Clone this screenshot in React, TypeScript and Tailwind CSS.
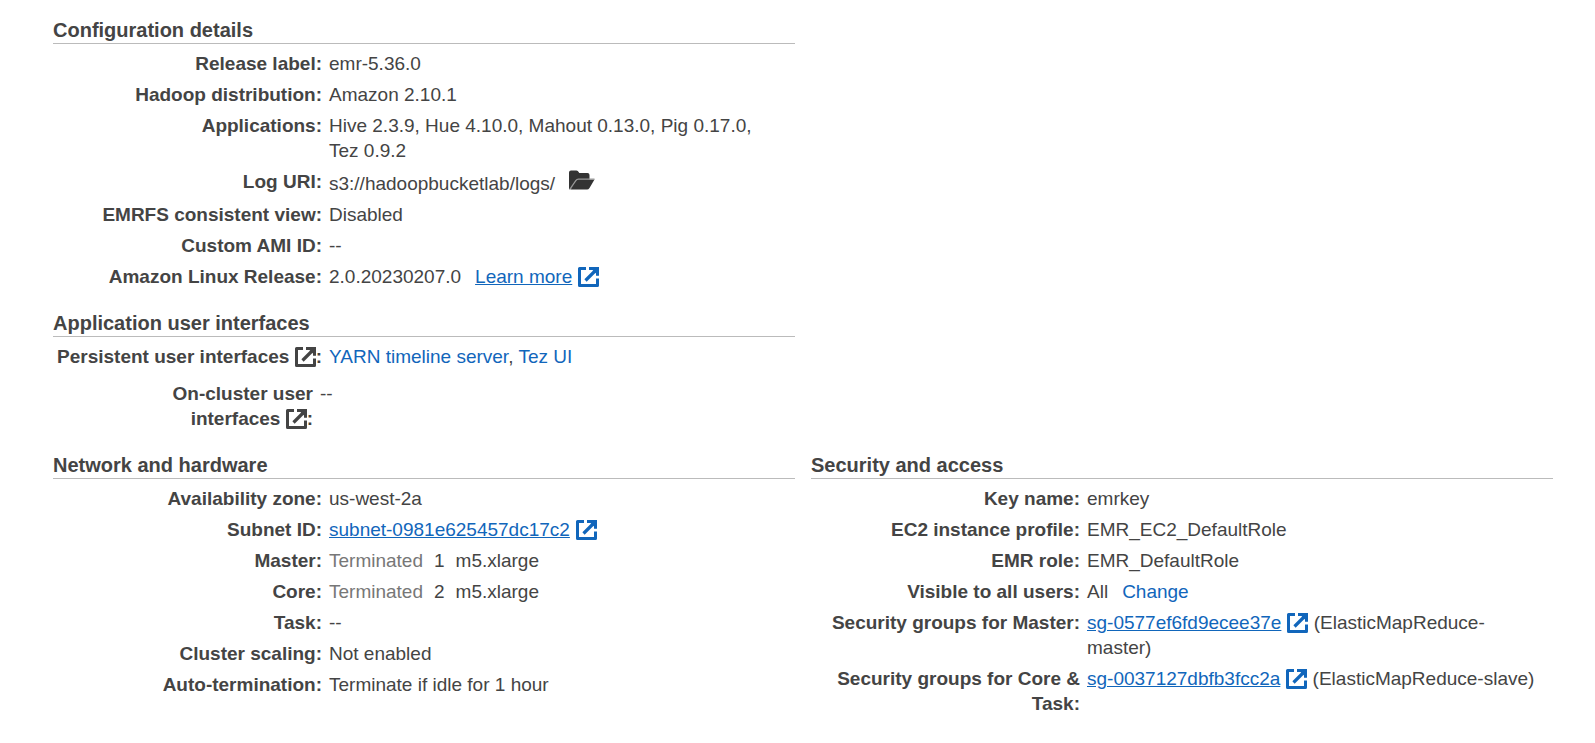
import type { ReactNode } from "react";

function ExternalIcon({ className = "text-[#1166bb]" }: { className?: string }) {
  return (
    <svg viewBox="0 0 21 20" className={`inline-block h-5 w-[21px] align-[-4px] ${className}`} fill="none" stroke="currentColor" strokeWidth="3" aria-hidden="true">
      <path d="M8 1.500H1.500V18.500H19.500V11.500" strokeLinejoin="round" />
      <path d="M11 1.500H19.500V8.800" />
      <path d="M18.500 2.500L7.500 13.500" strokeWidth="3.2" />
      <path d="M12.500 1L20 1L20 8.500Z" fill="currentColor" stroke="none" />
    </svg>
  );
}

function FolderIcon() {
  return (
    <svg viewBox="0 -1 26 21" className="inline-block h-[21px] w-[26px] align-baseline" aria-hidden="true">
      <path fill="#333" d="M0 18V2.5Q0 .5 2 .5H7.500Q9 .5 9.800 2.300L10.300 3H18.500Q20.500 3 20.500 5V10H10L1 19.500Q0 19.500 0 18Z" />
      <path fill="#333" d="M1.500 19.500L7.500 10.500Q8.500 9.500 10 9.500H25.500L20.500 18Q19.500 19.500 18 19.500Z" />
      <path fill="none" stroke="#999" strokeWidth="1.3" d="M1 19L6.800 10.600Q7.800 9.200 9.500 9.200H25.500" />
    </svg>
  );
}

function Section({ title, children, className = "" }: { title: string; children: ReactNode; className?: string }) {
  return (
    <section className={className}>
      <h2 className="border-b border-[#bbbbbb] pb-px text-[20px] leading-6 font-bold">{title}</h2>
      <dl className="flex flex-col gap-1.5 pt-[7px] pr-3.5">{children}</dl>
    </section>
  );
}

function Row({ label, children }: { label: ReactNode; children: ReactNode }) {
  return (
    <div className="flex">
      <dt className="w-[276px] shrink-0 pr-[7px] text-right font-bold">{label}:</dt>
      <dd className="min-w-0 flex-1">{children}</dd>
    </div>
  );
}

function Link({ children, underline = false }: { children: ReactNode; underline?: boolean }) {
  return (
    <a href="#" className={underline ? "text-[#1166bb] underline" : "text-[#1166bb]"}>
      {children}
    </a>
  );
}

function ExternalLink({ children }: { children: ReactNode }) {
  return (
    <>
      <Link underline>{children}</Link>
      <ExternalIcon className="ml-1.5 text-[#1166bb]" />
    </>
  );
}

export default function App() {
  return (
    <main className="min-h-screen bg-white pt-[18px] pr-[42px] pb-6 pl-[53px] font-['Liberation_Sans',Arial,sans-serif] text-[19px] leading-[25px] text-[#444444]">
      <div className="grid grid-cols-2 gap-x-4">
        <Section title="Configuration details">
          <Row label="Release label">emr-5.36.0</Row>
          <Row label="Hadoop distribution">Amazon 2.10.1</Row>
          <Row label="Applications">Hive 2.3.9, Hue 4.10.0, Mahout 0.13.0, Pig 0.17.0, Tez 0.9.2</Row>
          <Row label="Log URI">
            s3://hadoopbucketlab/logs/
            <button type="button" aria-label="Browse log folder" className="ml-3.5">
              <FolderIcon />
            </button>
          </Row>
          <Row label="EMRFS consistent view">Disabled</Row>
          <Row label="Custom AMI ID">--</Row>
          <Row label="Amazon Linux Release">
            <span className="mr-3.5">2.0.20230207.0</span>
            <ExternalLink>Learn more</ExternalLink>
          </Row>
        </Section>

        <Section title="Application user interfaces" className="col-start-1 mt-[22px]">
          <Row label={<>Persistent user interfaces <ExternalIcon className="text-[#444444]" /></>}>
            <Link>YARN timeline server</Link>, <Link>Tez UI</Link>
          </Row>
          <div className="flex pt-1.5">
            <dt className="w-[267px] shrink-0 pr-[7px] pl-20 text-right font-bold">
              On-cluster user interfaces <ExternalIcon className="text-[#444444]" />:
            </dt>
            <dd>--</dd>
          </div>
        </Section>

        <Section title="Network and hardware" className="col-start-1 mt-[22px]">
          <Row label="Availability zone">us-west-2a</Row>
          <Row label="Subnet ID">
            <ExternalLink>subnet-0981e625457dc17c2</ExternalLink>
          </Row>
          <Row label="Master">
            <span className="mr-[11px] text-[#777777]">Terminated</span>
            <span className="mr-[11px]">1</span>m5.xlarge
          </Row>
          <Row label="Core">
            <span className="mr-[11px] text-[#777777]">Terminated</span>
            <span className="mr-[11px]">2</span>m5.xlarge
          </Row>
          <Row label="Task">--</Row>
          <Row label="Cluster scaling">Not enabled</Row>
          <Row label="Auto-termination">Terminate if idle for 1 hour</Row>
        </Section>

        <Section title="Security and access" className="mt-[22px]">
          <Row label="Key name">emrkey</Row>
          <Row label="EC2 instance profile">EMR_EC2_DefaultRole</Row>
          <Row label="EMR role">EMR_DefaultRole</Row>
          <Row label="Visible to all users">
            <span className="mr-3.5">All</span>
            <Link>Change</Link>
          </Row>
          <Row label="Security groups for Master">
            <ExternalLink>sg-0577ef6fd9ecee37e</ExternalLink> (ElasticMapReduce-master)
          </Row>
          <Row label="Security groups for Core & Task">
            <ExternalLink>sg-0037127dbfb3fcc2a</ExternalLink> (ElasticMapReduce-slave)
          </Row>
        </Section>
      </div>
    </main>
  );
}
